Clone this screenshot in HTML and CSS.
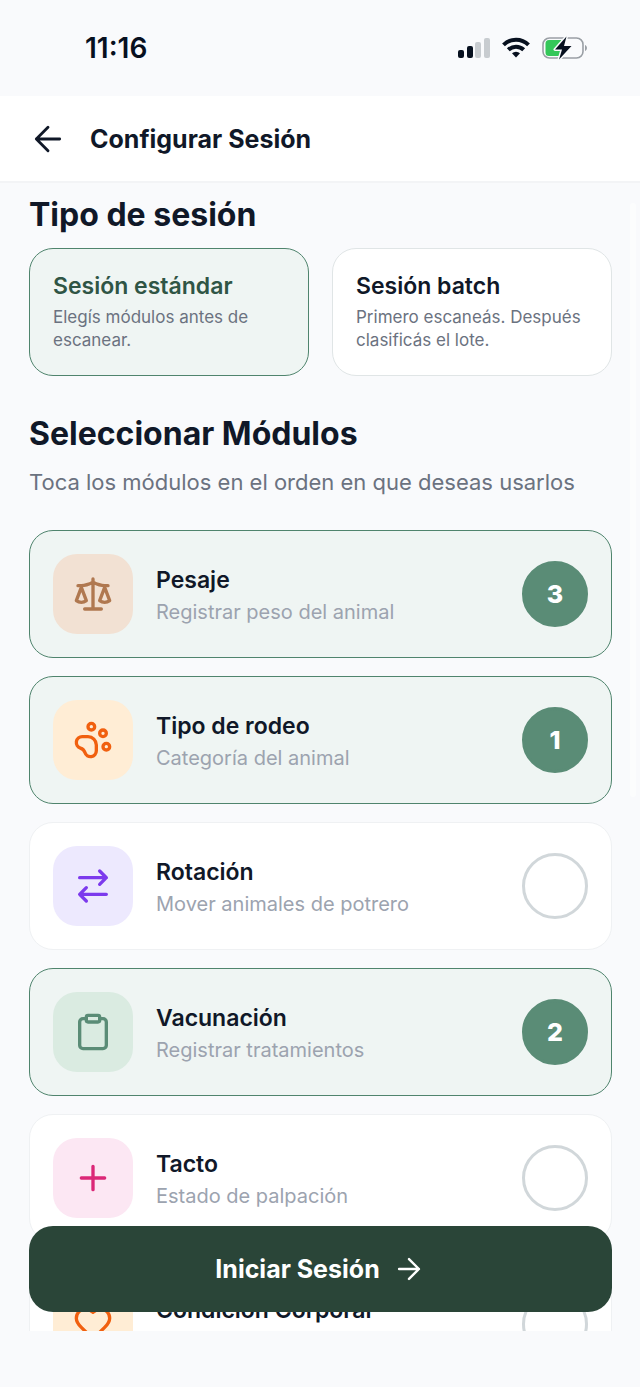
FILE: index.html
```html
<!DOCTYPE html>
<html lang="es">
<head>
<meta charset="utf-8">
<meta name="viewport" content="width=device-width, initial-scale=1">
<title>Configurar Sesión</title>
<link rel="stylesheet" href="styles.css">
</head>
<body>
<div class="app">
  <div class="status">
    <span class="time">11:16</span>
    <div class="status-icons">
      <svg width="32" height="22" viewBox="0 0 32 22" aria-hidden="true">
        <rect x="0" y="13" width="6" height="8" rx="2" fill="#07101f"/>
        <rect x="9" y="9" width="6" height="12" rx="2" fill="#07101f"/>
        <rect x="17" y="5" width="6" height="16" rx="2" fill="#c8ccd0"/>
        <rect x="26" y="1" width="6" height="20" rx="2" fill="#c8ccd0"/>
      </svg>
      <svg width="28" height="22" viewBox="0 0 28 22" aria-hidden="true">
        <g fill="none" stroke="#07101f" stroke-width="4">
          <path d="M1.5 7.8a17.8 17.8 0 0 1 25 0"/>
          <path d="M6.3 12.8a11 11 0 0 1 15.4 0"/>
        </g>
        <path fill="#07101f" d="M14 20.500l-4-4.200a5.800 5.800 0 0 1 8 0z"/>
      </svg>
      <svg width="46" height="24" viewBox="0 0 46 24" aria-hidden="true">
        <rect x="1" y="2" width="40" height="20" rx="6.500" fill="none" stroke="#9a9fa5" stroke-width="1.600"/>
        <path d="M43 9v6c2.600-1 2.600-5 0-6z" fill="#9a9fa5"/>
        <path d="M7 4h12v16H7a3.500 3.500 0 0 1-3.500-3.500v-9A3.500 3.500 0 0 1 7 4z" fill="#34c759"/>
        <path d="M24.500 0.500L13 13.500h7L17 23.500l12.500-13.500h-7.500z" fill="#07101f" stroke="#f9fafc" stroke-width="3" paint-order="stroke" stroke-linejoin="round"/>
      </svg>
    </div>
  </div>

  <header class="header">
    <button class="back" type="button" aria-label="Volver">
      <svg class="icon icon-thin" viewBox="0 0 24 24" aria-hidden="true"><path d="m12 19-7-7 7-7M19 12H5"/></svg>
    </button>
    <h1 class="header-title">Configurar Sesión</h1>
  </header>

  <div class="body">
    <main class="scroll">
      <section class="types">
        <h2 class="heading">Tipo de sesión</h2>
        <div class="type-row">
          <button class="type selected" type="button" aria-pressed="true">
            <span class="type-title">Sesión estándar</span>
            <span class="type-text">Elegís módulos antes de escanear.</span>
          </button>
          <button class="type" type="button" aria-pressed="false">
            <span class="type-title">Sesión batch</span>
            <span class="type-text">Primero escaneás. Después clasificás el lote.</span>
          </button>
        </div>
      </section>

      <section class="modules">
        <h2 class="heading">Seleccionar Módulos</h2>
        <p class="hint">Toca los módulos en el orden en que deseas usarlos</p>
        <div class="list">
          <button class="module selected" type="button" aria-pressed="true">
            <span class="tile brown"><svg class="icon" viewBox="0 0 24 24" aria-hidden="true"><path d="m16 16 3-8 3 8c-.87.65-1.92 1-3 1s-2.130-.35-3-1Z"/><path d="m2 16 3-8 3 8c-.87.65-1.920 1-3 1s-2.130-.35-3-1Z"/><path d="M7 21h10M12 3v18M3 7h2c2 0 5-1 7-2 2 1 5 2 7 2h2"/></svg></span>
            <span class="info"><span class="name">Pesaje</span><span class="desc">Registrar peso del animal</span></span>
            <span class="mark">3</span>
          </button>
          <button class="module selected" type="button" aria-pressed="true">
            <span class="tile orange"><svg class="icon" viewBox="0 0 24 24" aria-hidden="true"><circle cx="11" cy="4" r="2"/><circle cx="18" cy="8" r="2"/><circle cx="20" cy="16" r="2"/><path d="M9 10a5 5 0 0 1 5 5v3.500a3.500 3.500 0 0 1-6.840 1.045Q6.520 17.480 4.460 16.840A3.500 3.500 0 0 1 5.500 10Z"/></svg></span>
            <span class="info"><span class="name">Tipo de rodeo</span><span class="desc">Categoría del animal</span></span>
            <span class="mark">1</span>
          </button>
          <button class="module" type="button" aria-pressed="false">
            <span class="tile violet"><svg class="icon" viewBox="0 0 24 24" aria-hidden="true"><path d="m16 3 4 4-4 4M20 7H4M8 21l-4-4 4-4M4 17h16"/></svg></span>
            <span class="info"><span class="name">Rotación</span><span class="desc">Mover animales de potrero</span></span>
            <span class="mark"></span>
          </button>
          <button class="module selected" type="button" aria-pressed="true">
            <span class="tile green"><svg class="icon" viewBox="0 0 24 24" aria-hidden="true"><rect x="8" y="2" width="8" height="4" rx="1"/><path d="M16 4h2a2 2 0 0 1 2 2v14a2 2 0 0 1-2 2H6a2 2 0 0 1-2-2V6a2 2 0 0 1 2-2h2"/></svg></span>
            <span class="info"><span class="name">Vacunación</span><span class="desc">Registrar tratamientos</span></span>
            <span class="mark">2</span>
          </button>
          <button class="module" type="button" aria-pressed="false">
            <span class="tile pink"><svg class="icon" viewBox="0 0 24 24" aria-hidden="true"><path d="M5 12h14M12 5v14"/></svg></span>
            <span class="info"><span class="name">Tacto</span><span class="desc">Estado de palpación</span></span>
            <span class="mark"></span>
          </button>
          <button class="module" type="button" aria-pressed="false">
            <span class="tile orange"><svg class="icon" viewBox="0 0 24 24" aria-hidden="true"><path d="M19 14c1.490-1.460 3-3.210 3-5.500A5.500 5.500 0 0 0 16.500 3c-1.760 0-3 .5-4.500 2-1.500-1.500-2.740-2-4.500-2A5.500 5.500 0 0 0 2 8.500c0 2.300 1.500 4.050 3 5.500l7 7Z"/></svg></span>
            <span class="info"><span class="name">Condición Corporal</span></span>
            <span class="mark"></span>
          </button>
        </div>
      </section>
    </main>
    <span class="thumb"></span>
    <button class="start" type="button">
      Iniciar Sesión
      <svg class="icon icon-thin icon-small" viewBox="0 0 24 24" aria-hidden="true"><path d="M5 12h14M12 5l7 7-7 7"/></svg>
    </button>
  </div>
</div>
</body>
</html>
```
FILE: styles.css
```css
* { box-sizing: border-box; }

body {
  margin: 0;
  background: #f9fafc;
  color: #101828;
  font-family: Inter, "Liberation Sans", sans-serif;
}

button {
  margin: 0;
  padding: 0;
  border: 0;
  background: none;
  color: inherit;
  font: inherit;
  text-align: left;
  cursor: pointer;
}

h1, h2, p { margin: 0; }

.app {
  display: flex;
  flex-direction: column;
  height: 100vh;
  padding-bottom: 56px;
}

.status {
  display: flex;
  align-items: center;
  justify-content: space-between;
  height: 96px;
  flex: none;
  padding: 0 52px 0 85px;
  color: #07101f;
}

.time { font-size: 28px; font-weight: 600; }

.status-icons { display: flex; align-items: center; gap: 12px; }

.header {
  display: flex;
  align-items: center;
  gap: 22px;
  height: 87px;
  flex: none;
  padding: 0 28px;
  background: #fff;
  border-bottom: 2px solid #f3f4f6;
}

.back { display: flex; }

.header-title { font-size: 25px; line-height: 32px; font-weight: 700; }

.icon {
  display: block;
  width: 40px;
  height: 40px;
  fill: none;
  stroke: currentColor;
  stroke-width: 2;
  stroke-linecap: round;
  stroke-linejoin: round;
}

.icon-thin { stroke-width: 1.7; }

.icon-small { width: 34px; height: 34px; }

.body {
  position: relative;
  flex: 1;
  min-height: 0;
}

.scroll {
  height: 100%;
  overflow: hidden;
  padding: 12px 28px 0 29px;
}

.thumb {
  position: absolute;
  top: 20px;
  right: 4px;
  width: 6px;
  height: 594px;
  border-radius: 3px;
  background: #fcfdfd;
}

.heading { font-size: 32px; line-height: 40px; font-weight: 700; }

.type-row {
  display: grid;
  grid-template-columns: 1fr 1fr;
  gap: 23px;
  margin-top: 13px;
}

.type {
  display: flex;
  flex-direction: column;
  gap: 6px;
  padding: 23px;
  border: 1px solid #e0e5e6;
  border-radius: 24px;
  background: #fff;
}

.type-title { font-size: 23px; line-height: 28px; font-weight: 600; }

.type-text { font-size: 17px; line-height: 23px; color: #6b7280; }

.type.selected { border-color: #4f846d; background: #eff5f3; }

.type.selected .type-title { color: #2f5545; }

.modules { margin-top: 38px; }

.hint {
  margin-top: 12px;
  font-size: 22px;
  line-height: 32px;
  color: #6b7280;
}

.list {
  display: flex;
  flex-direction: column;
  gap: 18px;
  margin-top: 32px;
}

.module {
  display: flex;
  align-items: center;
  gap: 23px;
  padding: 23px;
  border: 1px solid #eff1f3;
  border-radius: 24px;
  background: #fff;
}

.module.selected { border-color: #4f846d; background: #eff5f3; }

.tile {
  display: grid;
  place-items: center;
  width: 80px;
  height: 80px;
  flex: none;
  border-radius: 24px;
}

.brown { background: #f2e1d3; color: #b07850; }
.orange { background: #ffedd5; color: #f1600f; }
.violet { background: #ede9fe; color: #7c3aed; }
.green { background: #daebe1; color: #5a8c76; }
.pink { background: #fce7f3; color: #db2777; }

.info {
  display: flex;
  flex-direction: column;
  flex: 1;
  gap: 4px;
  min-height: 62px;
  padding-top: 2px;
}

.name { font-size: 23px; line-height: 30px; font-weight: 600; }

.desc { font-size: 20px; line-height: 26px; color: #9ca3af; }

.mark {
  display: grid;
  place-items: center;
  width: 66px;
  height: 66px;
  flex: none;
  border: 3px solid #d1d7da;
  border-radius: 50%;
  color: #fff;
  font-size: 25px;
  font-weight: 800;
}

.selected .mark { border-color: #5a8c76; background: #5a8c76; }

.start {
  position: absolute;
  right: 28px;
  bottom: 19px;
  left: 29px;
  display: flex;
  align-items: center;
  justify-content: center;
  gap: 12px;
  height: 86px;
  border-radius: 24px;
  background: #2a4538;
  color: #fff;
  font-size: 25px;
  font-weight: 700;
}
```
